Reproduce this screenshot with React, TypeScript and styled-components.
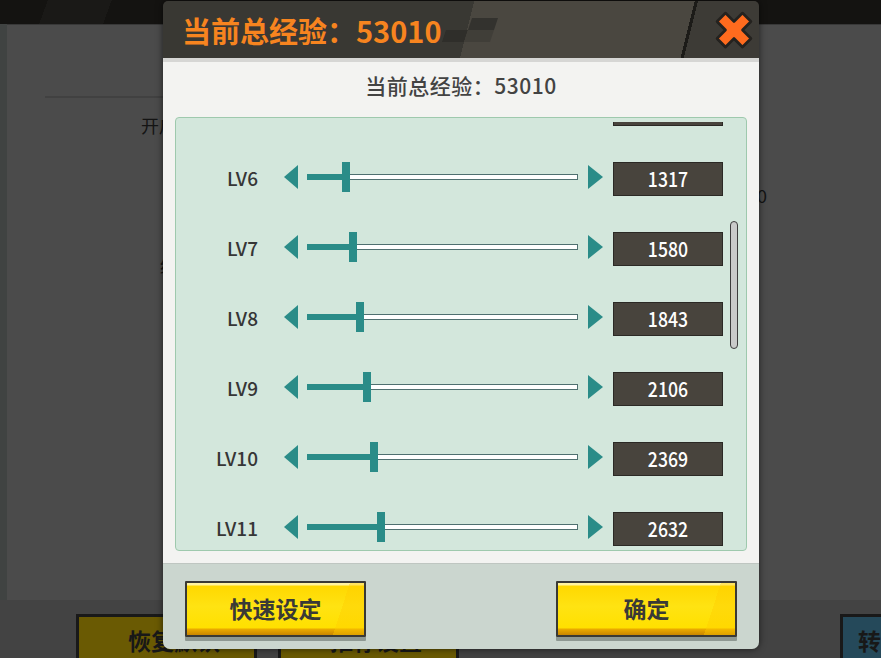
import { useEffect, useRef } from 'react'
import styled, { createGlobalStyle } from 'styled-components'

const GlobalStyle = createGlobalStyle`
  html, body {
    margin: 0;
    padding: 0;
  }
  body {
    width: 881px;
    height: 658px;
    overflow: hidden;
    background: #434343;
    font-family: 'Noto Sans CJK SC', 'Noto Sans', sans-serif;
  }
`;

const TEAL = '#2a8c88';
const MAX_EXP = 9900;
const RAIL_RANGE = 263;

const Screen = styled.div`
  position: relative;
  width: 881px;
  height: 658px;
  overflow: hidden;
  display: flex;
  flex-direction: column;
  background: #434343;
`;

const TopBar = styled.div`
  height: 24px;
  flex-shrink: 0;
  background: linear-gradient(110deg, #141311 0 45px, #1a1917 45px 105px, #141311 105px);
`;

const Middle = styled.div`
  display: flex;
  height: 576px;
  flex-shrink: 0;
`;

const SideStrip = styled.div`
  width: 7px;
  background: #404342;
`;

const BackPanel = styled.div`
  flex: 1;
  display: flex;
  flex-direction: column;
  background: #4b4b4b;
  border-top: 1px solid #383838;
  color: #141414;
  font-size: 18px;
`;

const Divider = styled.div`
  margin: 71px 0 0 38px;
  width: 700px;
  height: 2px;
  background: #414141;
`;

const BackRow = styled.div<{ $top: number; $left: number }>`
  display: flex;
  justify-content: space-between;
  margin-top: ${({ $top }) => $top}px;
  padding: 0 114px 0 ${({ $left }) => $left}px;
  height: 24px;
  line-height: 24px;
`;

const BottomRow = styled.div`
  display: flex;
  height: 58px;
  padding: 14px 0 0 76px;
  box-sizing: border-box;
  overflow: hidden;
`;

const BackButton = styled.div<{ $tone: 'yellow' | 'blue'; $gap: number }>`
  flex-shrink: 0;
  width: 181px;
  height: 64px;
  margin-left: ${({ $gap }) => $gap}px;
  box-sizing: border-box;
  border: 3px solid #191919;
  background: ${({ $tone }) => ($tone === 'yellow' ? '#6a5a03' : '#25495a')};
  color: #181818;
  font-size: 23px;
  font-weight: 700;
  line-height: 30px;
  display: flex;
  justify-content: ${({ $tone }) => ($tone === 'yellow' ? 'center' : 'flex-start')};
  padding: 8px 0 0 15px;
`;

const Modal = styled.div`
  position: absolute;
  left: 163px;
  top: 1px;
  width: 596px;
  height: 648px;
  display: flex;
  flex-direction: column;
  border-radius: 5px 5px 7px 7px;
  overflow: hidden;
  box-shadow: 0 0 7px rgba(0, 0, 0, 0.6);
`;

const Header = styled.div`
  height: 57px;
  flex-shrink: 0;
  display: flex;
  align-items: center;
  padding-left: 19px;
  background: linear-gradient(
    104deg,
    #393833 0 302px,
    #4a4740 302px 516px,
    #1c1b18 516px 519px,
    #3d3b36 519px
  );
`;

const Title = styled.h1`
  margin: 0;
  font-size: 29px;
  font-weight: 700;
  color: #f7841f;
  letter-spacing: 0;
`;

const Checker = styled.svg`
  width: 56px;
  height: 57px;
  flex-shrink: 0;
`;

const CloseButton = styled.button`
  margin-left: auto;
  margin-right: 5px;
  width: 40px;
  height: 40px;
  padding: 0;
  border: 0;
  background: none;
  cursor: pointer;
`;

const Body = styled.div`
  flex: 1;
  display: flex;
  flex-direction: column;
  background: #f3f3f1;
  border-top: 4px solid #d6d6d4;
  padding: 0 12px 12px;
`;

const Subtitle = styled.div`
  height: 55px;
  box-sizing: border-box;
  padding-bottom: 10px;
  display: flex;
  align-items: center;
  justify-content: center;
  font-size: 21px;
  font-weight: 500;
  letter-spacing: 0.5px;
  color: #434343;
`;

const LevelPanel = styled.div`
  position: relative;
  height: 434px;
  box-sizing: border-box;
  padding: 4px 0;
  background: #d3e7dc;
  border: 1px solid #9ec9ad;
  border-radius: 4px;
`;

const LevelList = styled.div`
  height: 100%;
  overflow: hidden;
`;

const Row = styled.div`
  height: 70px;
  display: flex;
  align-items: center;
`;

const Label = styled.div`
  width: 82px;
  margin-bottom: 4px;
  text-align: right;
  font-size: 19px;
  font-weight: 500;
  color: #363636;
`;

const Arrow = styled.div<{ $dir: 'left' | 'right' }>`
  width: 0;
  height: 0;
  margin-bottom: 4px;
  border-top: 12px solid transparent;
  border-bottom: 12px solid transparent;
  ${({ $dir }) =>
    $dir === 'left'
      ? `border-right: 14px solid ${TEAL}; margin-left: 26px;`
      : `border-left: 15px solid ${TEAL}; margin-left: 10px;`}
`;

const Track = styled.div`
  position: relative;
  width: 271px;
  height: 30px;
  margin: 0 0 4px 9px;
  display: flex;
  align-items: center;
`;

const Rail = styled.div`
  width: 100%;
  height: 6px;
  box-sizing: border-box;
  background: #ffffff;
  border: 1px solid #4f7070;
`;

const Fill = styled.div`
  position: absolute;
  left: 0;
  top: 12px;
  height: 6px;
  background: ${TEAL};
`;

const Thumb = styled.div`
  position: absolute;
  top: 0;
  width: 8px;
  height: 30px;
  background: ${TEAL};
`;

const ValueBox = styled.div`
  width: 110px;
  height: 34px;
  margin-left: 10px;
  box-sizing: border-box;
  background: #48443d;
  border: 1px solid #2b2925;
  color: #ffffff;
  display: flex;
  align-items: center;
  justify-content: center;
`;

const ValueText = styled.span`
  display: inline-block;
  margin-bottom: 3px;
  font-size: 21px;
  font-weight: 500;
  transform: scaleX(0.84);
`;

const ScrollThumb = styled.div`
  position: absolute;
  left: 554px;
  top: 103px;
  width: 8px;
  height: 128px;
  box-sizing: border-box;
  background: #c9cbca;
  border: 1.5px solid #3d3d3d;
  border-radius: 4px;
`;

const Footer = styled.div`
  height: 86px;
  flex-shrink: 0;
  display: flex;
  justify-content: space-between;
  align-items: flex-start;
  padding: 17px 22px 0;
  background: #cbd6cf;
  border-top: 1px solid #bfc6c1;
`;

const ActionButton = styled.button`
  width: 181px;
  height: 56px;
  box-sizing: border-box;
  border: 2px solid #3a3934;
  border-radius: 1px;
  padding: 0 0 2px;
  cursor: pointer;
  font-family: inherit;
  font-size: 23px;
  font-weight: 700;
  color: #3a3a36;
  background:
    linear-gradient(108deg, transparent 84%, rgba(255, 204, 0, 0.4) 84%),
    linear-gradient(
      to bottom,
      #fff3a0 0,
      #fff3a0 2px,
      #ffd800 3px,
      #ffe312 45%,
      #ffe000 86%,
      #eaa900 89%,
      #c98600 100%
    );
  box-shadow: 0 4px 0 #8e9892;
`;

const levels = Array.from({ length: 14 }, (_, i) => ({
  name: `LV${i + 1}`,
  value: 2 + 263 * i,
}));

function CloseIcon() {
  const a = 6;
  const l = 18;
  const pts = [
    [-a, -l], [a, -l], [a, -a], [l, -a], [l, a], [a, a],
    [a, l], [-a, l], [-a, a], [-l, a], [-l, -a], [-a, -a],
  ]
    .map(([x, y]) => `${x},${y}`)
    .join(' ');
  return (
    <svg width="40" height="40" viewBox="0 0 40 40">
      <g transform="translate(20 20) rotate(45)">
        <polygon points={pts} fill="#1f1e1b" transform="translate(0.8 1.2)" />
        <polygon points={pts} fill="#ff6b1e" stroke="#24221f" strokeWidth="2.6" strokeLinejoin="round" />
      </g>
    </svg>
  );
}

function App() {
  const listRef = useRef<HTMLDivElement>(null);

  useEffect(() => {
    if (listRef.current) listRef.current.scrollTop = 328;
  }, []);

  return (
    <Screen>
      <GlobalStyle />
      <TopBar />
      <Middle>
        <SideStrip />
        <BackPanel>
          <Divider />
          <BackRow $top={15} $left={134}>
            <span>开启自定义经验</span>
          </BackRow>
          <BackRow $top={46} $left={200}>
            <span>经验总值</span>
            <span>53010</span>
          </BackRow>
          <BackRow $top={46} $left={153}>
            <span>经验分配</span>
          </BackRow>
        </BackPanel>
      </Middle>
      <BottomRow>
        <BackButton $tone="yellow" $gap={0}>恢复默认</BackButton>
        <BackButton $tone="yellow" $gap={21}>推荐设置</BackButton>
        <BackButton $tone="blue" $gap={381}>转换</BackButton>
      </BottomRow>

      <Modal>
        <Header>
          <Title>当前总经验：53010</Title>
          <Checker viewBox="0 0 56 57">
            <polygon points="30,17 56,17 52,29 26,29" fill="#33322e" />
            <polygon points="4,29 26,29 22,41 0,41" fill="#2f2e2a" />
            <polygon points="26,29 52,29 48,41 22,41" fill="#403e38" />
          </Checker>
          <CloseButton aria-label="关闭">
            <CloseIcon />
          </CloseButton>
        </Header>
        <Body>
          <Subtitle>当前总经验：53010</Subtitle>
          <LevelPanel>
            <LevelList ref={listRef}>
              {levels.map((lv) => {
                const pos = Math.round((lv.value / MAX_EXP) * RAIL_RANGE);
                return (
                  <Row key={lv.name}>
                    <Label>{lv.name}</Label>
                    <Arrow $dir="left" />
                    <Track>
                      <Rail />
                      <Fill style={{ width: pos }} />
                      <Thumb style={{ left: pos }} />
                    </Track>
                    <Arrow $dir="right" />
                    <ValueBox>
                      <ValueText>{lv.value}</ValueText>
                    </ValueBox>
                  </Row>
                );
              })}
            </LevelList>
            <ScrollThumb />
          </LevelPanel>
        </Body>
        <Footer>
          <ActionButton>快速设定</ActionButton>
          <ActionButton>确定</ActionButton>
        </Footer>
      </Modal>
    </Screen>
  );
}

export default App
